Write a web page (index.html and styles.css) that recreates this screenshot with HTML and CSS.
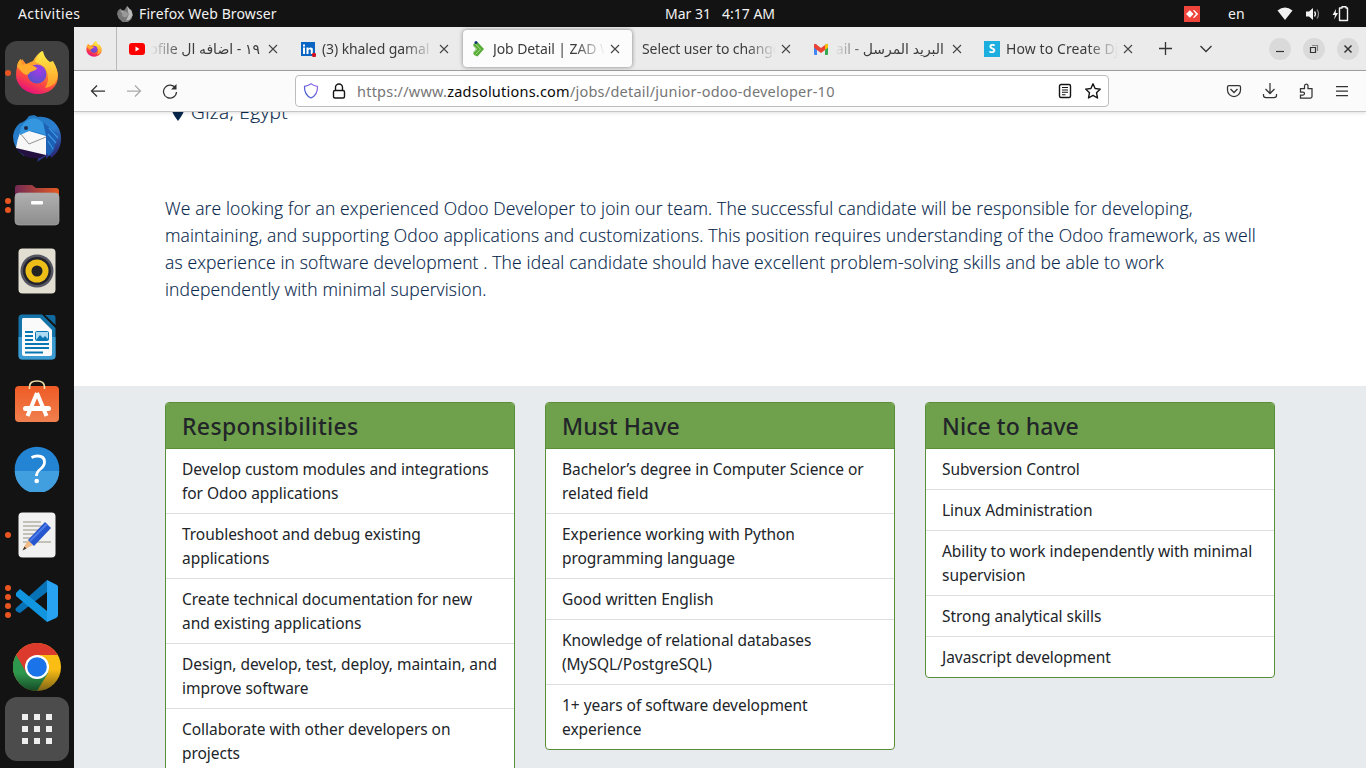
FILE: index.html
```html
<!DOCTYPE html>
<html lang="en">
<head>
<meta charset="utf-8">
<title>Job Detail | ZAD</title>
<link rel="stylesheet" href="styles.css">
</head>
<body>
<header class="topbar">
  <span class="activities">Activities</span>
  <svg class="app-ico" width="16" height="16" viewBox="0 0 44 44"><path d="M2 14 9 7l5 4 6 1 8-12 7 9 4 1 4 12-3 14-11 9H16L4 34 0 22Z" fill="#777"/><path d="m28 0 7 9 5 4 3 14-9 11-9 2 7-16Z" fill="#bbb"/><path d="m8 12 14 4-6 6Z" fill="#aaa"/><circle cx="22" cy="23" r="8" fill="#999"/></svg>
  <span class="app-name">Firefox Web Browser</span>
  <span class="clock"><span>Mar 31</span><span>4:17 AM</span></span>
  <svg class="anydesk" width="16" height="16" viewBox="0 0 16 16"><path fill="#ef443b" d="M0 0h16v16H0z"/><path fill="#fff" d="m5.800 4.200 3.800 3.800-3.800 3.800L2 8zM9 4.500l1.200-.5 4 4-4 4-1.200-.5L12 8z"/></svg>
  <span class="lang">en</span>
  <svg class="wifi" width="16" height="14" viewBox="0 0 16 14"><path fill="#f2f2f2" d="M.5 3.500Q8-2.500 15.500 3.500L8 13z"/></svg>
  <svg class="sound" width="16" height="14" viewBox="0 0 16 14"><path fill="#f2f2f2" d="M1 4.500h3L8 1v12L4 9.500H1z"/><path d="M9.500 4.500q2 2.500 0 5" fill="none" stroke="#f2f2f2" stroke-width="1.300"/><path d="M12 2.500q3 4.500 0 9" fill="none" stroke="#888" stroke-width="1.200"/></svg>
  <svg class="battery" width="18" height="16" viewBox="0 0 18 16"><path d="m4 3-3.500 6H3l-.8 4.500L6 7H3.700z" fill="#f2f2f2"/><path d="M10 2V.8h4V2h1.500v12.500h-8V2z" fill="none" stroke="#f2f2f2" stroke-width="1.400" stroke-linejoin="round"/></svg>
</header>
<div class="desktop">
<nav class="dock">
  <div class="launcher active"><i class="dots"><b></b></i>
    <svg width="44" height="44" viewBox="0 0 44 44"><defs>
      <linearGradient id="fx" x1=".8" y1="0" x2=".35" y2="1"><stop offset="0" stop-color="#fff04a"/><stop offset=".4" stop-color="#ffa02c"/><stop offset=".68" stop-color="#ff4d3d"/><stop offset="1" stop-color="#e5107c"/></linearGradient>
      <linearGradient id="fy" x1=".5" y1="0" x2=".5" y2="1"><stop offset="0" stop-color="#fff04a"/><stop offset="1" stop-color="#ff9a27"/></linearGradient>
      <radialGradient id="fp" cx=".6" cy=".3" r=".7"><stop offset="0" stop-color="#a13be8"/><stop offset="1" stop-color="#5a51c9"/></radialGradient></defs>
      <g id="firefox"><path fill="url(#fx)" d="M2 16c1-3 2-5 4-6l1-2 4 5 7-3q4-7 9-10 2 7 7 11l4 1q5 6 5 13c0 11-9 18-20 18S1 35 1 24q0-4 1-8"/><path fill="url(#fy)" d="M20 11q3-8 8-11 1 7 7 11l3-1q6 10 4 18-3 8-12 9 5-8 2-16-2-7-12-10"/><circle cx="22" cy="23" r="9.500" fill="url(#fp)"/><path fill="#ffac2e" d="M6 8q0 4 2 6 5-3 14 3c-1 4-7 2-8 6-5 3-8-4-12-7 0-4 2-7 4-8"/></g></svg></div>
  <div class="launcher">
    <svg width="50" height="50" viewBox="0 0 50 50"><defs><linearGradient id="tb" x1=".2" y1="0" x2=".8" y2="1"><stop offset="0" stop-color="#2077bd"/><stop offset=".5" stop-color="#2d80d2"/><stop offset="1" stop-color="#2a1867"/></linearGradient></defs><path fill="url(#tb)" d="M8 9q5-1 9-7l5-1 4 2c11-2 22 7 23 19 1 10-4 18-10 22l-1-3-4 4v-3l-9 6 2-6H12Q1 34 1 22 2 14 8 9"/><path fill="#f7f7f7" d="M8 19 17 17l17 5v19q-15 1-30-7 1-8 4-15"/><path d="m8 19 9 11 17-7" fill="none" stroke="#888" stroke-width=".9"/><path fill="#3396df" d="M14 7q8-6 16 1 9 5 5 14-9-5-18-5l-9 4q-1-8 6-14"/><path fill="#24103f" d="m4 34 30 7-6 3Q12 46 4 34"/><path fill="#1c61b5" d="m31 8 14 12-3 16-5 6-3-3V22z"/><path d="m37 14 9 10M36 20l8 9M36 27l5 8" stroke="#3a95df" stroke-width="1.200"/><circle cx="14" cy="14" r="2" fill="#202b4b"/></svg></div>
  <div class="launcher"><i class="dots"><b></b><b></b></i>
    <svg width="46" height="42" viewBox="0 0 46 42"><defs><linearGradient id="fo"><stop stop-color="#722a55"/><stop offset="1" stop-color="#e45a22"/></linearGradient><linearGradient id="fg" x2="0" y2="1"><stop stop-color="#b0b0b0"/><stop offset="1" stop-color="#8d8d8d"/></linearGradient></defs><path fill="url(#fo)" d="M1 4q0-3 3-3h14l4 3h20q3 0 3 3v13H1z"/><rect x="1" y="9" width="44" height="32" rx="4" fill="url(#fg)" stroke="#ababab" stroke-width=".7"/><rect x="17" y="17" width="12" height="3.500" rx="1" fill="#fff"/></svg></div>
  <div class="launcher">
    <svg width="38" height="46" viewBox="0 0 38 46"><rect x=".5" y=".5" width="37" height="45" rx="4" fill="#e2ded2"/><circle cx="19" cy="23" r="16.500" fill="#555562"/><circle cx="19" cy="23" r="14" fill="#23232d"/><circle cx="19" cy="23" r="11.500" fill="#edbd18"/><circle cx="19" cy="23" r="5.500" fill="#222"/></svg></div>
  <div class="launcher">
    <svg width="38" height="46" viewBox="0 0 38 46"><path d="M4 .5h20L37.500 14v28q0 3.500-4 3.500H4q-3.500 0-3.500-4V4Q.5.500 4 .5" fill="#1474a9"/><path d="M.5 23h37v19q0 3.500-4 3.500H4q-3.500 0-3.500-4z" fill="#3c9bd0"/><path d="M5 4h17l12 12v24q0 2-2 2H6q-2 0-2-2V6q0-2 1-2" fill="#fafafa"/><path d="M27 1h8q2.500 0 2.500 2v8z" fill="#10699d"/><path d="M7 18h8M7 22h8M7 26h8M7 30h24M7 34h24M7 38.500h18" stroke="#0878b5" stroke-width="2"/><rect x="17.500" y="17.500" width="13" height="9" rx="1" fill="#addcf2" stroke="#0878b5"/><path d="m18 26 4-5 3 3 2-2 4 4z" fill="#0878b5"/></svg></div>
  <div class="launcher">
    <svg class="bag" width="46" height="46" viewBox="0 0 46 46"><defs><linearGradient id="so" x2="0" y2="1"><stop stop-color="#ee5b25"/><stop offset="1" stop-color="#f0804f"/></linearGradient></defs><rect x="1" y="8" width="44" height="36" rx="4" fill="url(#so)"/><path d="M15.500 11V9q0-6 7.500-6t7.500 6v2" fill="none" stroke="#eedca8" stroke-width="1.700"/><path d="M23 15 13.500 38M23 15l9.500 23" stroke="#fff" stroke-width="4"/><rect x="9" y="28" width="28" height="5" rx="2.500" fill="#fff"/></svg></div>
  <div class="launcher">
    <svg width="46" height="46" viewBox="0 0 46 46"><circle cx="23" cy="23" r="22.300" fill="#2384d3"/><path d="M.7 25h44.600a22.300 22.300 0 0 1-44.600 0" fill="#429fdf"/><path d="M17.500 11.500q3-1.500 6-1.500 7 0 7 6 0 4-4 7t-4 7" fill="none" stroke="#fff" stroke-width="2.800"/><circle cx="22.700" cy="35" r="2.300" fill="#fff"/></svg></div>
  <div class="launcher"><i class="dots"><b></b></i>
    <svg width="38" height="46" viewBox="0 0 38 46"><rect x=".5" y=".5" width="37" height="45" rx="4" fill="#f1f1f1"/><path d="M5 10h18M5 14h20M5 18h17M5 22h14M5 26h12M5 30h28" stroke="#c4c2b8" stroke-width="1.800"/><path d="m10 28 5 5-8 4-2 1 1-3z" fill="#efbb86"/><path d="m6.500 34.500 2 2-4 2z" fill="#47362b"/><path d="M10 28 27 10l6 6-17 18z" fill="#2556cd"/><path d="m12 29 17-17" stroke="#4e7deb" stroke-width="2"/></svg></div>
  <div class="launcher"><i class="dots"><b></b><b></b><b></b><b></b></i>
    <svg width="44" height="44" viewBox="0 0 44 44"><path d="m1 29 31-28v12L5 34q-6-2-4-5" fill="#0872b7"/><path d="m1 14 4-4 27 22v11L1 17z" fill="#1195df"/><path d="m32 1 10 5q1 1 1 2v28q0 2-2 3l-9 4z" fill="#28a3f2"/></svg></div>
  <div class="launcher">
    <svg width="48" height="48" viewBox="0 0 48 48"><defs><linearGradient id="cy" x2="0" y2="1"><stop offset=".55" stop-color="#fabd13"/><stop offset="1" stop-color="#7c6418"/></linearGradient><linearGradient id="cg" x2="0" y2="1"><stop offset=".5" stop-color="#2d984d"/><stop offset="1" stop-color="#174926"/></linearGradient></defs><circle cx="24" cy="24" r="24" fill="url(#cy)"/><path d="M24 24 3.200 12A24 24 0 0 0 24 48l11-18z" fill="url(#cg)"/><path d="M24 24 13.600 30 3.200 12A24 24 0 0 1 44.800 12H24z" fill="#db3a2d"/><circle cx="24" cy="24" r="12" fill="#fff"/><circle cx="24" cy="24" r="9.800" fill="#1a73e8"/></svg></div>
  <div class="launcher apps"><svg width="30" height="30" viewBox="0 0 30 30"><path d="M3 0v30M15 0v30M27 0v30" stroke="#eee" stroke-width="6" stroke-dasharray="6 6"/></svg></div>
</nav>
<main class="window">
  <div class="tabs">
    <div class="pinned"><svg width="16" height="16" viewBox="0 0 44 44"><use href="#firefox"/></svg></div>
    <div class="tab"><svg width="16" height="16" viewBox="0 0 16 16"><rect y="2" width="16" height="12" rx="3" fill="red"/><path d="m6.500 5.500 4 2.500-4 2.500z" fill="#fff"/></svg><span class="title rtl">١٩ - اضافه ال ofile</span><svg class="close" viewBox="0 0 10 10"><path d="m1 1 8 8M9 1 1 9"/></svg></div>
    <div class="tab"><svg width="16" height="16" viewBox="0 0 16 16"><path d="M1 1h14v14H1z" fill="#0a66c2"/><path d="M3 6.500h2V13H3zM3 3.500h2v2H3zM6.500 6.500h2v1q2-2 4.300 0V13h-2V9q-1-1.500-2.300 0v4h-2z" fill="#fff"/><circle cx="14" cy="14" r="2.200" fill="#d11124"/></svg><span class="title">(3) khaled gamal |</span><svg class="close" viewBox="0 0 10 10"><path d="m1 1 8 8M9 1 1 9"/></svg></div>
    <div class="tab current"><svg width="16" height="16" viewBox="0 0 16 16"><path d="M3 2.500 6.500 1 13 8l-6.500 7.500L3 14l-1-2.500L5 8 2 4.500z" fill="#58ad36"/><path d="m2 4.500 4 3.800-4 3.700M4.500 3l5 5.300L4.500 13.500" stroke="#c9e8b8" stroke-width=".7" fill="none"/><circle cx="5" cy="1.500" r="1.500" fill="#18377b"/></svg><span class="title">Job Detail | ZAD W</span><svg class="close" viewBox="0 0 10 10"><path d="m1 1 8 8M9 1 1 9"/></svg></div>
    <div class="tab plain"><span class="title">Select user to change</span><svg class="close" viewBox="0 0 10 10"><path d="m1 1 8 8M9 1 1 9"/></svg></div>
    <div class="tab"><svg width="16" height="16" viewBox="0 0 16 16"><path d="M1 3.500h3V14H2q-1 0-1-1z" fill="#4285f4"/><path d="M12 3.500h3V13q0 1-1 1h-2z" fill="#34a853"/><path d="M12 4q3-3 3 1v1.500L12 9z" fill="#fbbc04"/><path d="M1 5q0-4 3-1l4 3 4-3v5l-4 3-4-3-3-2.500z" fill="#ea4335"/></svg><span class="title rtl">البريد المرسل - ail</span><svg class="close" viewBox="0 0 10 10"><path d="m1 1 8 8M9 1 1 9"/></svg></div>
    <div class="tab"><span class="s-ico">S</span><span class="title wide">How to Create Dj</span><svg class="close" viewBox="0 0 10 10"><path d="m1 1 8 8M9 1 1 9"/></svg></div>
    <svg class="plus" width="13" height="13" viewBox="0 0 13 13"><path d="M6.500 0v13M0 6.500h13"/></svg>
    <svg class="chev" width="12" height="8" viewBox="0 0 12 8"><path d="m.5 1 5.500 5.500L11.500 1"/></svg>
    <div class="controls">
      <i><svg width="10" height="10" viewBox="0 0 10 10"><path d="M1 7.500h8"/></svg></i>
      <i><svg width="10" height="10" viewBox="0 0 10 10"><path d="M1.500 3.500h5v5h-5z"/><path d="M3 1.500h5.500V7" stroke="#888"/></svg></i>
      <i><svg width="10" height="10" viewBox="0 0 10 10"><path d="m1.500 1.500 7 7M8.500 1.500l-7 7" stroke-width="1.500"/></svg></i>
    </div>
  </div>
  <div class="toolbar">
    <svg class="ico" viewBox="0 0 16 16"><path d="M15 8H1.500M7 2.500 1.500 8 7 13.500"/></svg>
    <svg class="ico dim" viewBox="0 0 16 16"><path d="M1 8h13.500M9 2.500 14.500 8 9 13.500"/></svg>
    <svg class="ico" viewBox="0 0 16 16"><path d="M13.700 5.500A6.500 6.500 0 1 0 14.500 9"/><path d="M14.500 1v5.500H9z" fill="#333" stroke="none"/></svg>
    <div class="urlbar">
      <svg class="ico" viewBox="0 0 16 16"><defs><linearGradient id="sh" x1="0" y1="1" x2="1" y2="0"><stop stop-color="#3157cf"/><stop offset="1" stop-color="#a56ce8"/></linearGradient></defs><path d="M8 .8q3 2.200 6.500 2.500c.3 5.700-1 9.200-6.500 11.700C2.500 12.500 1.200 9 1.500 3.300Q5 3 8 .8z" stroke="url(#sh)"/></svg>
      <svg class="ico lock" viewBox="0 0 16 16"><rect x="2.500" y="7.500" width="11" height="7.500" rx="1.500"/><path d="M4.500 7V4.500a3.500 3.500 0 0 1 7 0V7"/></svg>
      <span class="url">https://www.<b>zadsolutions.com</b>/jobs/detail/junior-odoo-developer-10</span>
      <svg class="ico dark" viewBox="0 0 16 16"><rect x="2.500" y="1.500" width="11" height="13" rx="1.500"/><path stroke-width="1.100" d="M5 4.500h6M5 7h6M5 9.300h6M5 11.700h3.500"/></svg>
      <svg class="ico dark" viewBox="0 0 16 16"><path stroke-linejoin="round" d="m8 .8 2.100 4.700 5.200.6-3.800 3.600 1 5.300L8 12.400 3.500 15l1-5.300L.7 6.100l5.200-.6z"/></svg>
    </div>
    <svg class="ico pocket" viewBox="0 0 16 16"><path d="M3 2.500h10q1.500 0 1.500 1.500v3a6.500 6.500 0 0 1-13 0V4q0-1.500 1.500-1.500"/><path d="M4.500 6 8 9.500 11.500 6"/></svg>
    <svg class="ico" viewBox="0 0 16 16"><path d="M8 0v10.500M3.500 6 8 10.500 12.500 6M1.500 11v1.500Q1.500 14.500 4 14.500h8q2.500 0 2.500-2V11"/></svg>
    <svg class="ico" viewBox="0 0 16 16"><path d="M2.500 15h10q1.500 0 1.500-1.500v-8H10V3Q10 1 8.300 1T6.500 3v2.500h-4V9H5q1.500 0 1.500 1.500T5 12H2.500z"/></svg>
    <svg class="ico" viewBox="0 0 16 16"><path d="M2 3.500h12M2 8h12M2 12.500h12"/></svg>
  </div>
  <article class="page">
    <div class="container">
      <div class="place"><svg width="12" height="17" viewBox="0 0 12 17"><path d="M6 17Q0 9 0 6a6 6 0 0 1 12 0q0 3-6 11" fill="#06264b"/></svg><span>Giza, Egypt</span></div>
      <p class="intro">We are looking for an experienced Odoo Developer to join our team. The successful candidate will be responsible for developing,<br>maintaining, and supporting Odoo applications and customizations. This position requires understanding of the Odoo framework, as well<br>as experience in software development . The ideal candidate should have excellent problem-solving skills and be able to work<br>independently with minimal supervision.</p>
    </div>
    <section class="skills">
      <div class="container cols">
        <div class="card"><h4 class="h-resp">Responsibilities</h4><ul>
          <li>Develop custom modules and integrations<br>for Odoo applications</li>
          <li>Troubleshoot and debug existing<br>applications</li>
          <li>Create technical documentation for new<br>and existing applications</li>
          <li>Design, develop, test, deploy, maintain, and<br>improve software</li>
          <li>Collaborate with other developers on<br>projects</li></ul></div>
        <div class="card"><h4>Must Have</h4><ul>
          <li>Bachelor’s degree in Computer Science or<br>related field</li>
          <li>Experience working with Python<br>programming language</li>
          <li>Good written English</li>
          <li>Knowledge of relational databases<br>(MySQL/PostgreSQL)</li>
          <li>1+ years of software development<br>experience</li></ul></div>
        <div class="card"><h4>Nice to have</h4><ul>
          <li>Subversion Control</li>
          <li>Linux Administration</li>
          <li>Ability to work independently with minimal<br>supervision</li>
          <li>Strong analytical skills</li>
          <li>Javascript development</li></ul></div>
      </div>
    </section>
  </article>
</main>
</div>
</body>
</html>
```
FILE: styles.css
```css
* { box-sizing: border-box; }
body { margin: 0; width: 1366px; height: 768px; overflow: hidden; background: #131313; font-family: "Noto Sans", "DejaVu Sans", sans-serif; font-size: 14px; }
svg { display: block; flex: none; }
.topbar { height: 27px; display: flex; align-items: center; color: #f2f2f2; white-space: nowrap; padding-left: 18px; }
.topbar span { line-height: 27px; }
.activities { width: 99px; letter-spacing: .4px; }
.app-name { margin-left: 6px; width: 526px; letter-spacing: .12px; }
.clock { display: flex; gap: 11px; width: 519px; letter-spacing: 0; }
.lang { width: 50px; margin-left: 28px; }
.wifi { margin-left: -1px; }
.sound { margin-left: 12px; }
.battery { margin-left: 11px; }
.desktop { display: flex; height: 741px; }
.dock { width: 74px; padding: 14px 5px 0; display: flex; flex-direction: column; gap: 2px; }
.launcher { position: relative; width: 64px; height: 64px; flex: none; display: flex; align-items: center; justify-content: center; border-radius: 12px; }
.launcher.active { background: #414141; }
.launcher.apps { background: #4c4c4c; margin-top: -4px; }
.bag { margin-bottom: 5px; }
.dots { position: absolute; left: 0; top: 0; height: 64px; width: 6px; display: flex; flex-direction: column; justify-content: center; gap: 3px; }
.dots b { width: 6px; height: 6px; border-radius: 50%; background: #e95420; }

.window { width: 1292px; display: flex; flex-direction: column; background: #fff; }
.tabs { height: 44px; flex: none; background: #ebebeb; border-bottom: 1px solid #a3a3a3; display: flex; align-items: center; color: #3c3c3c; }
.pinned { width: 43px; height: 43px; border-right: 1px solid #b9b9b9; padding: 14px 0 0 12px; margin-right: 3px; }
.tab { width: 171px; height: 37px; display: flex; align-items: center; padding: 0 13px 0 9px; flex: none; }
.tab.current { background: #fcfcfc; border-radius: 4px; box-shadow: 0 0 4px rgba(0,0,0,.45); width: 169px; margin: 0 1px; padding: 0 12px 0 8px; }
.title { flex: 1; min-width: 0; margin: 0 5px 0 6px; overflow: hidden; white-space: nowrap; letter-spacing: -.1px; line-height: 24px; -webkit-mask-image: linear-gradient(to left, transparent, #000 30px); mask-image: linear-gradient(to left, transparent, #000 30px); }
.wide { letter-spacing: .1px; }
.rtl { direction: rtl; margin-right: 8px; -webkit-mask-image: linear-gradient(to right, transparent, #000 30px); mask-image: linear-gradient(to right, transparent, #000 30px); letter-spacing: 0; }
.plain .title { margin-left: 0; }
.close { width: 10px; height: 10px; stroke: #444; stroke-width: 1.1; fill: none; }
.s-ico { width: 16px; height: 16px; background: #1caedf; color: #fff; font: bold 12px/16px "Noto Sans", sans-serif; text-align: center; flex: none; }
.plus, .chev { stroke: #333; stroke-width: 1.3; fill: none; }
.plus { margin-left: 13px; }
.chev { margin-left: 28px; }
.controls { display: flex; gap: 12px; margin-left: 57px; }
.controls i { width: 22px; height: 22px; border-radius: 50%; background: #dadada; display: flex; align-items: center; justify-content: center; }
.controls svg { fill: none; stroke: #333; stroke-width: 1.2; }

.toolbar { height: 41px; flex: none; background: #fbfbfb; border-bottom: 1px solid #c6c6c6; display: flex; align-items: center; padding-left: 16px; gap: 20px; position: relative; box-shadow: 0 1px 4px rgba(0,0,0,.13); }
.ico { width: 16px; height: 16px; fill: none; stroke: #333; stroke-width: 1.25; }
.dim { stroke: #aaa; }
.dark, .lock { stroke: #151515; stroke-width: 1.4; }
.urlbar { width: 814px; height: 32px; margin-left: 97px; border: 1px solid #bdbdbd; border-radius: 4px; background: #fff; display: flex; align-items: center; gap: 12px; padding: 0 7px; }
.url { flex: 1; color: #767676; font-size: 14.500px; letter-spacing: .225px; line-height: 28px; white-space: nowrap; margin-left: -2px; }
.url b { font-weight: 400; color: #0a0a0a; }
.pocket { margin-left: 97px; }

.page { flex: 1; min-height: 0; overflow: hidden; color: #06264b; font-family: "Open Sans", "Noto Sans", sans-serif; font-weight: 300; -webkit-text-stroke: .15px #06264b; }
.container { width: 1110px; margin: 0 auto; }
.place { display: flex; gap: 7px; margin-top: -13px; padding-left: 7px; height: 27px; font-size: 19px; letter-spacing: .4px; line-height: 26px; }
.place svg { margin-top: 5px; }
.intro { margin: 69px 0 83px; font-size: 17.500px; line-height: 27px; white-space: nowrap; letter-spacing: .143px; }
.skills { background: #e7ebee; padding-top: 16px; height: 600px; }
.cols { display: flex; gap: 30px; align-items: flex-start; color: #212529; font-family: "Noto Sans", sans-serif; font-weight: 400; -webkit-text-stroke: 0; }
.card { width: 350px; background: #fff; border: 1px solid #5c8e38; border-radius: 4px; overflow: hidden; }
.card h4 { margin: 0; height: 46px; line-height: 46px; padding-left: 16px; font-size: 23px; font-weight: 500; letter-spacing: .05px; background: #6fa04b; border-bottom: 1px solid #5c8e38; }
.card .h-resp { letter-spacing: .33px; }
.card ul { margin: 0; padding: 0; list-style: none; }
.card li { padding: 8px 16px; font-size: 15.500px; line-height: 24px; border-bottom: 1px solid #dcdfe1; letter-spacing: -.045px; white-space: nowrap; }
.card li:last-child { border-bottom: 0; }
```
